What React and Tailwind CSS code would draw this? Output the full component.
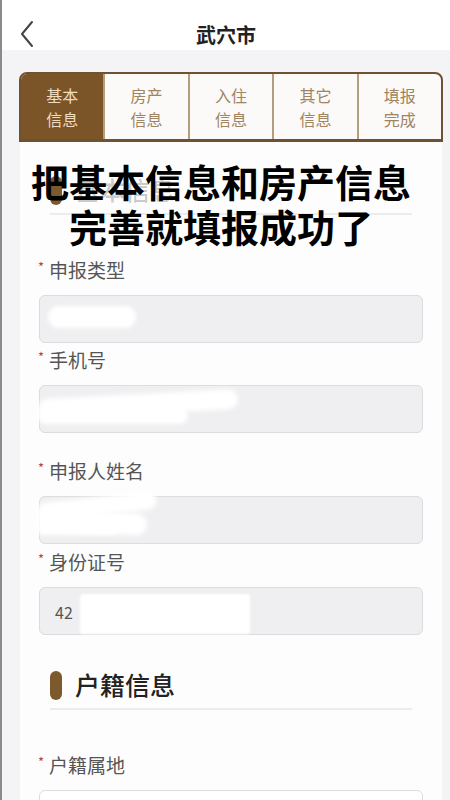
import React from "react";

const font = { fontFamily: '"Noto Sans CJK SC", "Noto Sans", sans-serif' };

function Label({ text, className = "" }) {
  return (
    <div className={"flex h-[28px] items-center pl-[18px] " + className}>
      <span className="mr-[5px] mt-[-6px] text-[13px] text-[#c0413b]">*</span>
      <span className="text-[19px] text-[#555]">{text}</span>
    </div>
  );
}

function Input({ children, className = "" }) {
  return (
    <div
      className={
        "relative mx-[19px] h-[48px] rounded-[6px] border border-[#dcdcde] bg-[#efeff1] " +
        className
      }
    >
      {children}
    </div>
  );
}

function SectionHeader({ text, textClass = "text-[#222]", className = "" }) {
  return (
    <div className={"mx-[30px] border-b-2 border-[#ececee] pb-[8px] " + className}>
      <div className="flex h-[30px] items-center gap-[13px]">
        <div className="h-[29px] w-[12px] rounded-full bg-[#7d5a2e]" />
        <span className={"text-[25px] font-medium " + textClass}>{text}</span>
      </div>
    </div>
  );
}

export default function App() {
  const tabs = [
    ["基本", "信息"],
    ["房产", "信息"],
    ["入住", "信息"],
    ["其它", "信息"],
    ["填报", "完成"],
  ];
  return (
    <div
      className="relative h-[800px] w-[450px] overflow-hidden border-l-2 border-[#8a8a8a] bg-[#f4f4f6]"
      style={font}
    >
      {/* header */}
      <div className="relative flex h-[50px] items-center justify-center bg-white pt-[20px]">
        <svg
          className="absolute left-[16px] top-[20px]"
          width="18"
          height="28"
          viewBox="0 0 18 28"
          fill="none"
          stroke="#444"
          strokeWidth="2"
          strokeLinecap="round"
          strokeLinejoin="round"
        >
          <path d="M14 2 L4 14 L14 26" />
        </svg>
        <span className="text-[20px] font-bold text-[#222]">武穴市</span>
      </div>

      {/* tabs */}
      <div className="ml-[17px] mr-[7px] mt-[22px] flex h-[70px] overflow-hidden rounded-t-[8px] border-2 border-b-[3px] border-[#6f5232] bg-[#fbfaf8]">
        {tabs.map((t, i) => (
          <div
            key={i}
            className={
              "flex flex-1 flex-col items-center justify-center text-[16px] leading-[24px] " +
              (i === 0
                ? "bg-[#7b5428] text-[#eedcc2]"
                : "border-l-2 border-[#b39d7f] text-[#a08462]")
            }
          >
            <span>{t[0]}</span>
            <span>{t[1]}</span>
          </div>
        ))}
      </div>

      {/* card */}
      <div className="relative ml-[18px] mr-[8px] h-[700px] bg-[#fdfdfd] pt-[33px]">
        <SectionHeader text="基本信息" textClass="text-[#aaa] opacity-60" />

        <Label text="申报类型" className="mt-[41px]" />
        <Input className="mt-[11px]">
          <div className="absolute left-[8px] top-[10px] h-[22px] w-[88px] rounded-full bg-white blur-[2px]" />
        </Input>

        <Label text="手机号" className="mt-[3px]" />
        <Input className="mt-[11px]">
          <div className="absolute left-[-2px] top-[8px] h-[20px] w-[200px] -rotate-3 rounded-full bg-white blur-[2px]" />
          <div className="absolute left-[-2px] top-[22px] h-[16px] w-[150px] rounded-full bg-white blur-[2px]" />
        </Input>

        <Label text="申报人姓名" className="mt-[24px]" />
        <Input className="mt-[11px]">
          <div className="absolute left-[-3px] top-[0px] h-[18px] w-[120px] -rotate-6 rounded-full bg-white blur-[2px]" />
          <div className="absolute left-[-3px] top-[14px] h-[22px] w-[110px] rotate-3 rounded-full bg-white blur-[2px]" />
          <div className="absolute left-[-3px] top-[26px] h-[12px] w-[80px] rounded-full bg-white blur-[2px]" />
        </Input>

        <Label text="身份证号" className="mt-[4px]" />
        <Input className="mt-[11px]">
          <span className="absolute left-[15px] top-[12px] text-[16px] text-[#555]">42</span>
          <div className="absolute left-[40px] top-[6px] h-[40px] w-[170px] rounded-[3px] bg-white blur-[1px]" />
        </Input>

        <SectionHeader text="户籍信息" className="mt-[35px]" />

        <Label text="户籍属地" className="mt-[41px]" />
        <div className="mx-[19px] mt-[11px] h-[48px] rounded-[6px] border border-[#dcdcde] bg-white" />

        {/* overlay caption */}
        <div className="absolute left-[0px] top-[16px] w-[402px] text-center text-[38px] font-bold leading-[45px] text-black">
          <div>把基本信息和房产信息</div>
          <div>完善就填报成功了</div>
        </div>
      </div>
    </div>
  );
}
